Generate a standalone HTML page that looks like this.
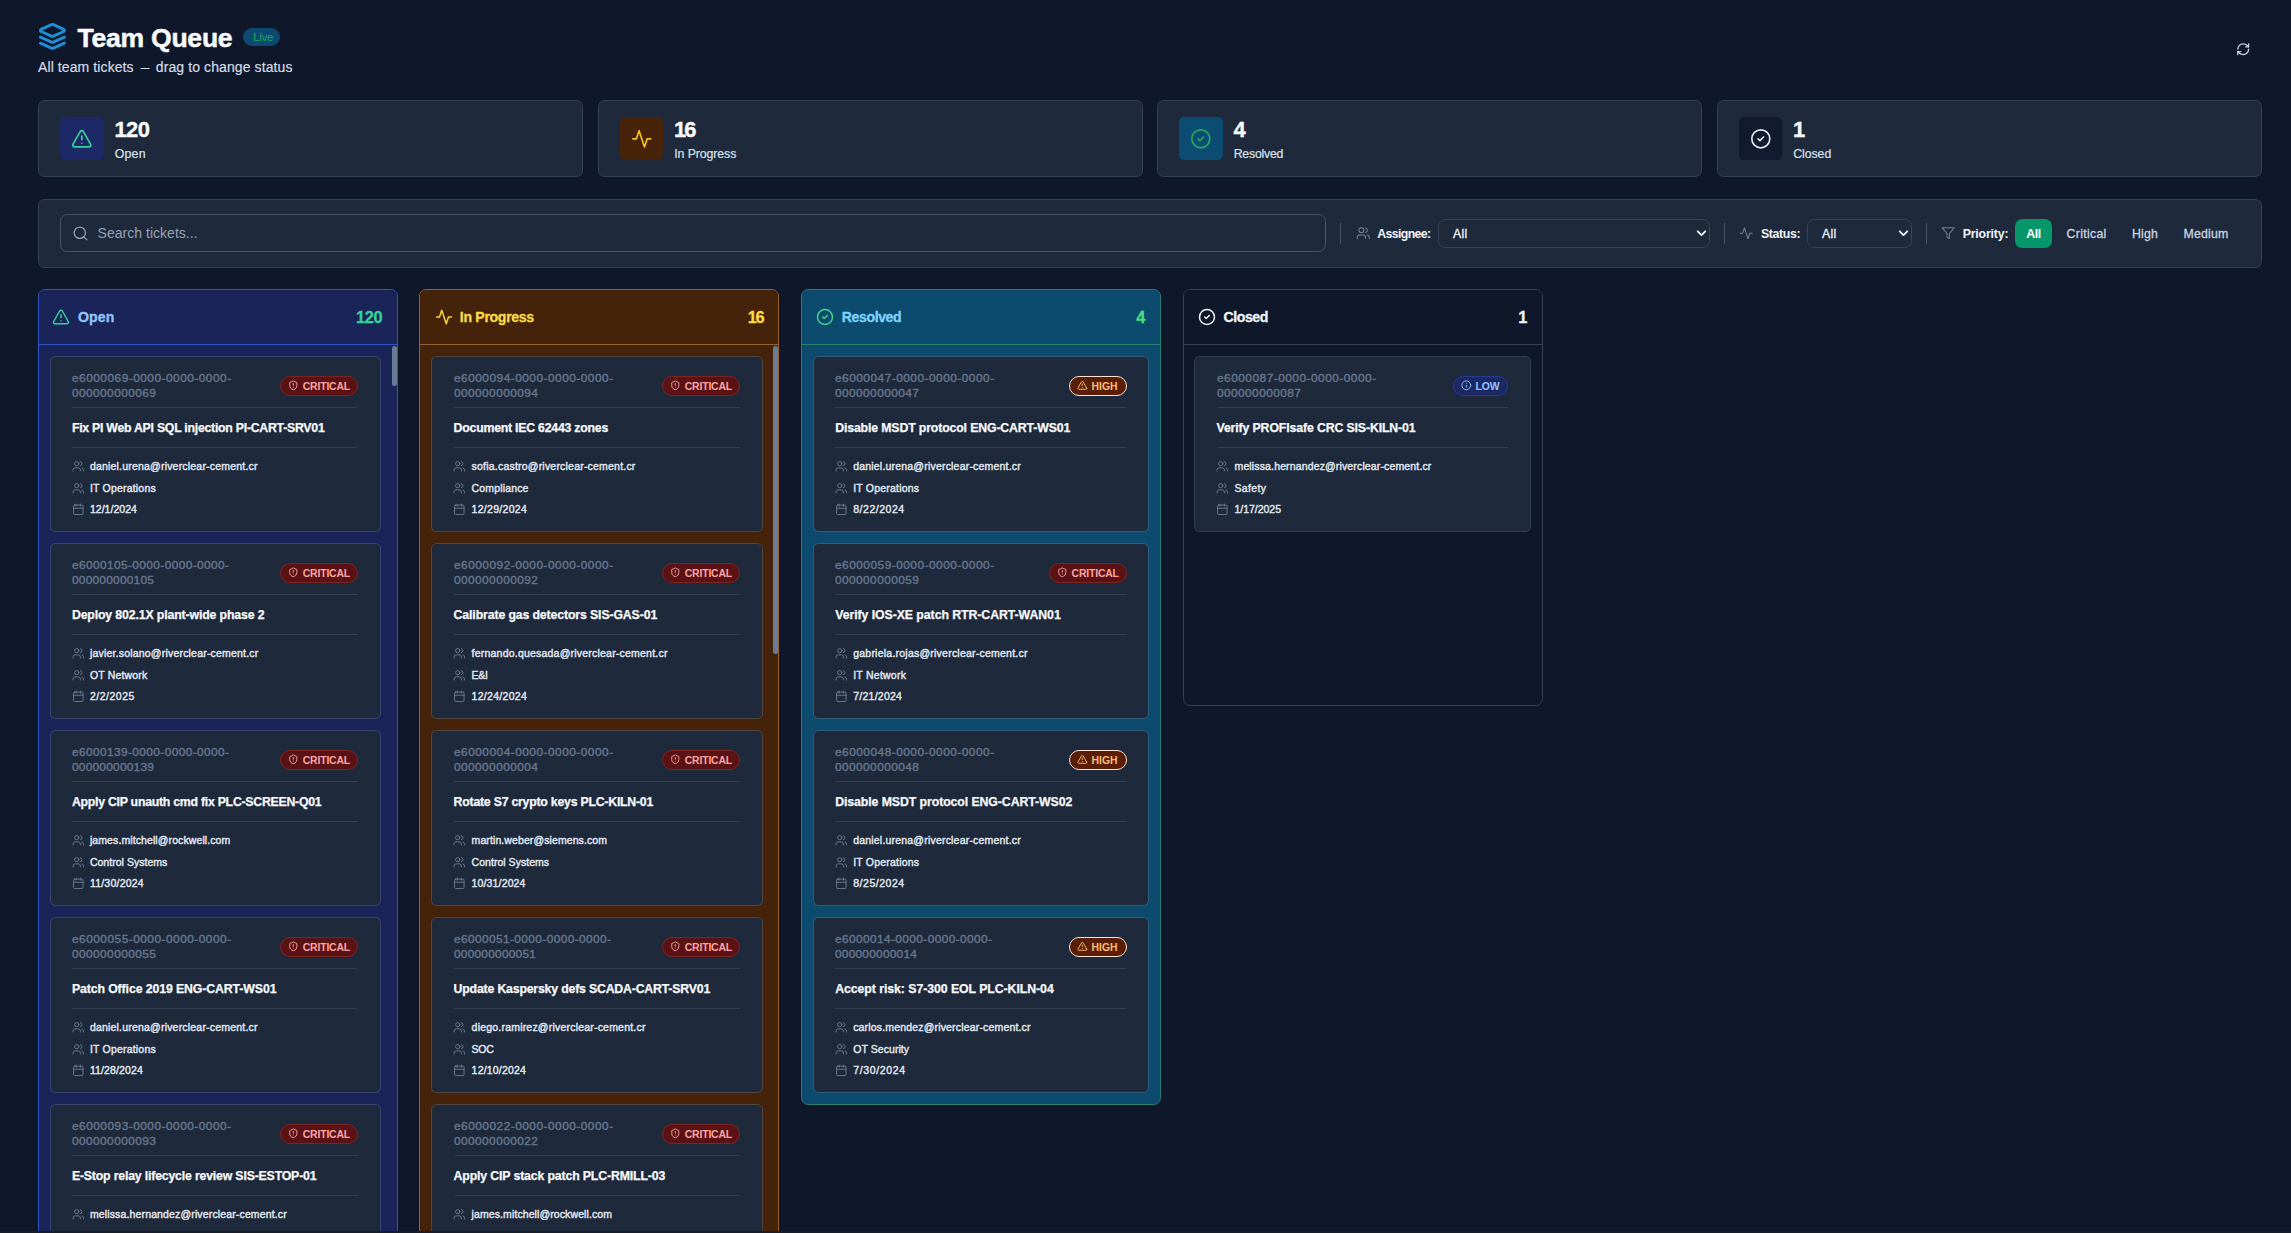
<!DOCTYPE html><html><head><meta charset="utf-8"><title>Team Queue</title><style>html,body{margin:0;padding:0;background:#0f172a;}body{width:2291px;height:1233px;overflow:hidden;position:relative;font-family:"Liberation Sans", sans-serif;}svg{display:block;overflow:visible}span{display:block}</style></head><body><svg style="position:absolute;left:38.30px;top:22.40px;" width="28.8" height="28.8" viewBox="0 0 24 24" fill="none" stroke="#1f8ed6" stroke-width="2.45" stroke-linecap="round" stroke-linejoin="round"><path d="m12.83 2.18a2 2 0 0 0-1.66 0L2.6 6.08a1 1 0 0 0 0 1.83l8.58 3.91a2 2 0 0 0 1.66 0l8.58-3.9a1 1 0 0 0 0-1.83Z"/><path d="m22 17.65-9.17 4.16a2 2 0 0 1-1.66 0L2 17.65"/><path d="m22 12.65-9.17 4.16a2 2 0 0 1-1.66 0L2 12.65"/></svg>
<span style="position:absolute;top:24.58px;font-size:26.6px;line-height:1;color:#f8fafc;white-space:nowrap;left:77.40px;font-weight:700;-webkit-text-stroke:0.5px #f8fafc;letter-spacing:-0.264px;">Team Queue</span>
<div style="position:absolute;left:243.00px;top:27.80px;width:37.20px;height:18.40px;box-sizing:border-box;background:#0c4a72;border-radius:10px;"></div>
<span style="position:absolute;top:31.28px;font-size:11.6px;line-height:1;color:#20a659;white-space:nowrap;left:253.20px;letter-spacing:-0.320px;">Live</span>
<span style="position:absolute;top:59.75px;font-size:14.0px;line-height:1;color:#d3dbe6;white-space:nowrap;left:38.00px;-webkit-text-stroke:0.2px #d3dbe6;letter-spacing:0.098px;">All team tickets <span style="display:inline-block;transform:scaleX(.62)">—</span> drag to change status</span>
<svg style="position:absolute;left:2236.00px;top:41.60px;" width="14.4" height="14.4" viewBox="0 0 24 24" fill="none" stroke="#cbd5e1" stroke-width="2.2" stroke-linecap="round" stroke-linejoin="round"><path d="M3 12a9 9 0 0 1 9-9 9.75 9.75 0 0 1 6.74 2.74L21 8"/><path d="M21 3v5h-5"/><path d="M21 12a9 9 0 0 1-9 9 9.75 9.75 0 0 1-6.74-2.74L3 16"/><path d="M8 16H3v5"/></svg>
<div style="position:absolute;left:38.25px;top:100.00px;width:545.08px;height:77.00px;box-sizing:border-box;background:#1e293b;border:1px solid #334155;border-radius:6.5px;"></div>
<div style="position:absolute;left:60.25px;top:117.00px;width:43.40px;height:43.20px;box-sizing:border-box;background:#1d2866;border-radius:5.4px;"></div>
<svg style="position:absolute;left:71.15px;top:127.80px;" width="21.6" height="21.6" viewBox="0 0 24 24" fill="none" stroke="#34d399" stroke-width="1.85" stroke-linecap="round" stroke-linejoin="round"><path d="m21.73 18-8-14a2 2 0 0 0-3.48 0l-8 14A2 2 0 0 0 4 21h16a2 2 0 0 0 1.73-3Z"/><path d="M12 9v4"/><path d="M12 17h.01"/></svg>
<span style="position:absolute;top:118.56px;font-size:21.9px;line-height:1;color:#f8fafc;white-space:nowrap;left:114.45px;font-weight:700;-webkit-text-stroke:0.4px #f8fafc;letter-spacing:-0.510px;">120</span>
<span style="position:absolute;top:147.59px;font-size:12.3px;line-height:1;color:#d9e1ec;white-space:nowrap;left:114.75px;-webkit-text-stroke:0.2px #d9e1ec;letter-spacing:0.227px;">Open</span>
<div style="position:absolute;left:597.73px;top:100.00px;width:545.08px;height:77.00px;box-sizing:border-box;background:#1e293b;border:1px solid #334155;border-radius:6.5px;"></div>
<div style="position:absolute;left:619.73px;top:117.00px;width:43.40px;height:43.20px;box-sizing:border-box;background:#47230a;border-radius:5.4px;"></div>
<svg style="position:absolute;left:630.62px;top:127.80px;" width="21.6" height="21.6" viewBox="0 0 24 24" fill="none" stroke="#fbbf24" stroke-width="1.85" stroke-linecap="round" stroke-linejoin="round"><path d="M22 12h-4l-3 9L9 3l-3 9H2"/></svg>
<span style="position:absolute;top:118.56px;font-size:21.9px;line-height:1;color:#f8fafc;white-space:nowrap;left:673.93px;font-weight:700;-webkit-text-stroke:0.4px #f8fafc;letter-spacing:-1.930px;">16</span>
<span style="position:absolute;top:147.59px;font-size:12.3px;line-height:1;color:#d9e1ec;white-space:nowrap;left:674.23px;-webkit-text-stroke:0.2px #d9e1ec;letter-spacing:-0.081px;">In Progress</span>
<div style="position:absolute;left:1157.20px;top:100.00px;width:545.08px;height:77.00px;box-sizing:border-box;background:#1e293b;border:1px solid #334155;border-radius:6.5px;"></div>
<div style="position:absolute;left:1179.20px;top:117.00px;width:43.40px;height:43.20px;box-sizing:border-box;background:#0d4c72;border-radius:5.4px;"></div>
<svg style="position:absolute;left:1190.10px;top:127.80px;" width="21.6" height="21.6" viewBox="0 0 24 24" fill="none" stroke="#21ab5c" stroke-width="1.85" stroke-linecap="round" stroke-linejoin="round"><circle cx="12" cy="12" r="10"/><path d="m9 12 2 2 4-4"/></svg>
<span style="position:absolute;top:118.56px;font-size:21.9px;line-height:1;color:#f8fafc;white-space:nowrap;left:1233.40px;font-weight:700;-webkit-text-stroke:0.4px #f8fafc;letter-spacing:1.312px;">4</span>
<span style="position:absolute;top:147.59px;font-size:12.3px;line-height:1;color:#d9e1ec;white-space:nowrap;left:1233.70px;-webkit-text-stroke:0.2px #d9e1ec;letter-spacing:-0.221px;">Resolved</span>
<div style="position:absolute;left:1716.68px;top:100.00px;width:545.08px;height:77.00px;box-sizing:border-box;background:#1e293b;border:1px solid #334155;border-radius:6.5px;"></div>
<div style="position:absolute;left:1738.68px;top:117.00px;width:43.40px;height:43.20px;box-sizing:border-box;background:#111a2e;border-radius:5.4px;"></div>
<svg style="position:absolute;left:1749.58px;top:127.80px;" width="21.6" height="21.6" viewBox="0 0 24 24" fill="none" stroke="#e2e8f0" stroke-width="1.85" stroke-linecap="round" stroke-linejoin="round"><circle cx="12" cy="12" r="10"/><path d="m9 12 2 2 4-4"/></svg>
<span style="position:absolute;top:118.56px;font-size:21.9px;line-height:1;color:#f8fafc;white-space:nowrap;left:1792.88px;font-weight:700;-webkit-text-stroke:0.4px #f8fafc;letter-spacing:-4.188px;">1</span>
<span style="position:absolute;top:147.59px;font-size:12.3px;line-height:1;color:#d9e1ec;white-space:nowrap;left:1793.18px;-webkit-text-stroke:0.2px #d9e1ec;letter-spacing:-0.047px;">Closed</span>
<div style="position:absolute;left:38.25px;top:199.00px;width:2223.50px;height:69.00px;box-sizing:border-box;background:#1e293b;border:1px solid #334155;border-radius:6.5px;"></div>
<div style="position:absolute;left:60.00px;top:214.00px;width:1266.00px;height:38.00px;box-sizing:border-box;background:#1e293b;border:1px solid #475569;border-radius:7.2px;"></div>
<svg style="position:absolute;left:71.50px;top:224.70px;" width="17" height="17" viewBox="0 0 24 24" fill="none" stroke="#94a3b8" stroke-width="1.8" stroke-linecap="round" stroke-linejoin="round"><circle cx="11" cy="11" r="8"/><path d="m21 21-4.3-4.3"/></svg>
<span style="position:absolute;top:226.15px;font-size:14.0px;line-height:1;color:#94a3b8;white-space:nowrap;left:97.60px;letter-spacing:0.024px;">Search tickets...</span>
<div style="position:absolute;left:1340.00px;top:223.00px;width:1.00px;height:21.00px;box-sizing:border-box;background:#475569;"></div>
<svg style="position:absolute;left:1356.00px;top:226.20px;" width="14.4" height="14.4" viewBox="0 0 24 24" fill="none" stroke="#75849b" stroke-width="1.7" stroke-linecap="round" stroke-linejoin="round"><path d="M16 21v-2a4 4 0 0 0-4-4H6a4 4 0 0 0-4 4v2"/><circle cx="9" cy="7" r="4"/><path d="M22 21v-2a4 4 0 0 0-3-3.87"/><path d="M16 3.13a4 4 0 0 1 0 7.75"/></svg>
<span style="position:absolute;top:227.59px;font-size:12.3px;line-height:1;color:#f1f5f9;white-space:nowrap;left:1377.20px;font-weight:700;letter-spacing:-0.598px;">Assignee:</span>
<div style="position:absolute;left:1438.00px;top:219.00px;width:272.00px;height:29.00px;box-sizing:border-box;background:#1e293b;border:1px solid #374559;border-radius:7.2px;"></div>
<span style="position:absolute;top:227.59px;font-size:12.3px;line-height:1;color:#f1f5f9;white-space:nowrap;left:1453.00px;-webkit-text-stroke:0.3px #f1f5f9;letter-spacing:0.276px;">All</span>
<svg style="position:absolute;left:1694.50px;top:226.50px;" width="13" height="13" viewBox="0 0 24 24" fill="none" stroke="#f1f5f9" stroke-width="3.4" stroke-linecap="round" stroke-linejoin="round"><path d="m5 8 7 7 7-7"/></svg>
<div style="position:absolute;left:1724.00px;top:223.00px;width:1.00px;height:21.00px;box-sizing:border-box;background:#475569;"></div>
<svg style="position:absolute;left:1739.00px;top:225.60px;" width="14.4" height="14.4" viewBox="0 0 24 24" fill="none" stroke="#75849b" stroke-width="1.7" stroke-linecap="round" stroke-linejoin="round"><path d="M22 12h-4l-3 9L9 3l-3 9H2"/></svg>
<span style="position:absolute;top:227.59px;font-size:12.3px;line-height:1;color:#f1f5f9;white-space:nowrap;left:1761.00px;font-weight:700;letter-spacing:-0.355px;">Status:</span>
<div style="position:absolute;left:1807.00px;top:219.00px;width:105.00px;height:29.00px;box-sizing:border-box;background:#1e293b;border:1px solid #374559;border-radius:7.2px;"></div>
<span style="position:absolute;top:227.59px;font-size:12.3px;line-height:1;color:#f1f5f9;white-space:nowrap;left:1822.00px;-webkit-text-stroke:0.3px #f1f5f9;letter-spacing:0.276px;">All</span>
<svg style="position:absolute;left:1896.50px;top:226.50px;" width="13" height="13" viewBox="0 0 24 24" fill="none" stroke="#f1f5f9" stroke-width="3.4" stroke-linecap="round" stroke-linejoin="round"><path d="m5 8 7 7 7-7"/></svg>
<div style="position:absolute;left:1926.00px;top:223.00px;width:1.00px;height:21.00px;box-sizing:border-box;background:#475569;"></div>
<svg style="position:absolute;left:1941.00px;top:226.00px;" width="14.4" height="14.4" viewBox="0 0 24 24" fill="none" stroke="#75849b" stroke-width="1.7" stroke-linecap="round" stroke-linejoin="round"><polygon points="22 3 2 3 10 12.46 10 19 14 21 14 12.46 22 3"/></svg>
<span style="position:absolute;top:227.59px;font-size:12.3px;line-height:1;color:#f1f5f9;white-space:nowrap;left:1962.70px;font-weight:700;letter-spacing:-0.162px;">Priority:</span>
<div style="position:absolute;left:2015.00px;top:219.00px;width:37.00px;height:29.00px;box-sizing:border-box;background:#059669;border-radius:7.2px;"></div>
<span style="position:absolute;top:227.59px;font-size:12.3px;line-height:1;color:#ffffff;white-space:nowrap;left:2026.30px;font-weight:700;letter-spacing:-0.406px;">All</span>
<span style="position:absolute;top:227.59px;font-size:12.3px;line-height:1;color:#cbd5e1;white-space:nowrap;left:2066.60px;-webkit-text-stroke:0.3px #cbd5e1;letter-spacing:0.303px;">Critical</span>
<span style="position:absolute;top:227.59px;font-size:12.3px;line-height:1;color:#cbd5e1;white-space:nowrap;left:2132.00px;-webkit-text-stroke:0.3px #cbd5e1;letter-spacing:0.176px;">High</span>
<span style="position:absolute;top:227.59px;font-size:12.3px;line-height:1;color:#cbd5e1;white-space:nowrap;left:2183.50px;-webkit-text-stroke:0.3px #cbd5e1;letter-spacing:0.208px;">Medium</span>
<div style="position:absolute;left:38.00px;top:289.00px;width:360.00px;height:1011.00px;box-sizing:border-box;background:#1b2459;border:1px solid #3354bd;border-radius:7.2px;overflow:hidden;"><div style="position:absolute;left:0.00px;top:0.00px;width:358.00px;height:55.00px;box-sizing:border-box;background:#1b2459;border-bottom:1px solid #3354bd;"></div><svg style="position:absolute;left:13.35px;top:18.40px;" width="18" height="18" viewBox="0 0 24 24" fill="none" stroke="#34d399" stroke-width="2" stroke-linecap="round" stroke-linejoin="round"><path d="m21.73 18-8-14a2 2 0 0 0-3.48 0l-8 14A2 2 0 0 0 4 21h16a2 2 0 0 0 1.73-3Z"/><path d="M12 9v4"/><path d="M12 17h.01"/></svg><span style="position:absolute;top:20.26px;font-size:14.1px;line-height:1;color:#93c5fd;white-space:nowrap;left:38.95px;font-weight:700;-webkit-text-stroke:0.3px #93c5fd;letter-spacing:0.117px;">Open</span><span style="position:absolute;top:18.92px;font-size:16.4px;line-height:1;color:#34d399;white-space:nowrap;right:14.85px;font-weight:700;-webkit-text-stroke:0.3px #34d399;letter-spacing:-0.386px;">120</span><div style="position:absolute;left:11.00px;top:66.00px;width:331.00px;height:176.00px;box-sizing:border-box;background:#1e293b;background-clip:padding-box;border:1px solid rgba(100,116,139,0.42);border-radius:5.6px;overflow:hidden;"><span style="position:absolute;top:16.03px;font-size:10.6px;line-height:1;color:#66768e;white-space:nowrap;left:20.90px;-webkit-text-stroke:0.38px #66768e;transform:scaleX(1.12);transform-origin:0 0;letter-spacing:0.439px;">e6000069-0000-0000-0000-</span><span style="position:absolute;top:30.93px;font-size:10.6px;line-height:1;color:#66768e;white-space:nowrap;left:20.90px;-webkit-text-stroke:0.38px #66768e;transform:scaleX(1.12);transform-origin:0 0;letter-spacing:0.380px;">000000000069</span><div style="position:absolute;left:229.40px;top:18.70px;width:78.00px;height:20.50px;box-sizing:border-box;background:#5b1214;border:1px solid #7c2623;border-radius:11px;"><svg style="position:absolute;left:6.80px;top:3.50px;" width="10.6" height="10.6" viewBox="0 0 24 24" fill="none" stroke="#fca5a5" stroke-width="2.1" stroke-linecap="round" stroke-linejoin="round"><path d="M20 13c0 5-3.5 7.5-7.66 8.95a1 1 0 0 1-.67-.01C7.5 20.5 4 18 4 13V6a1 1 0 0 1 1-1c2 0 4.5-1.2 6.24-2.72a1.17 1.17 0 0 1 1.52 0C14.51 3.81 17 5 19 5a1 1 0 0 1 1 1z"/><path d="M12 8v4"/><path d="M12 16h.01"/></svg><span style="position:absolute;top:5.30px;font-size:10.4px;line-height:1;color:#fca5a5;white-space:nowrap;left:21.40px;font-weight:700;letter-spacing:-0.161px;">CRITICAL</span></div><div style="position:absolute;left:21.10px;top:50.00px;width:286.30px;height:1.00px;box-sizing:border-box;background:#323e53;"></div><span style="position:absolute;top:65.29px;font-size:12.3px;line-height:1;color:#f8fafc;white-space:nowrap;left:20.90px;font-weight:700;-webkit-text-stroke:0.25px #f8fafc;letter-spacing:-0.255px;">Fix PI Web API SQL injection PI-CART-SRV01</span><div style="position:absolute;left:21.10px;top:90.00px;width:286.30px;height:1.00px;box-sizing:border-box;background:#323e53;"></div><svg style="position:absolute;left:20.50px;top:103.00px;" width="12.6" height="12.6" viewBox="0 0 24 24" fill="none" stroke="#718096" stroke-width="1.7" stroke-linecap="round" stroke-linejoin="round"><path d="M16 21v-2a4 4 0 0 0-4-4H6a4 4 0 0 0-4 4v2"/><circle cx="9" cy="7" r="4"/><path d="M22 21v-2a4 4 0 0 0-3-3.87"/><path d="M16 3.13a4 4 0 0 1 0 7.75"/></svg><span style="position:absolute;top:104.31px;font-size:10.5px;line-height:1;color:#e2e8f0;white-space:nowrap;left:38.90px;-webkit-text-stroke:0.4px #e2e8f0;letter-spacing:0.199px;">daniel.urena@riverclear-cement.cr</span><svg style="position:absolute;left:20.50px;top:124.50px;" width="12.6" height="12.6" viewBox="0 0 24 24" fill="none" stroke="#718096" stroke-width="1.7" stroke-linecap="round" stroke-linejoin="round"><path d="M16 21v-2a4 4 0 0 0-4-4H6a4 4 0 0 0-4 4v2"/><circle cx="9" cy="7" r="4"/><path d="M22 21v-2a4 4 0 0 0-3-3.87"/><path d="M16 3.13a4 4 0 0 1 0 7.75"/></svg><span style="position:absolute;top:125.81px;font-size:10.5px;line-height:1;color:#e2e8f0;white-space:nowrap;left:38.90px;-webkit-text-stroke:0.4px #e2e8f0;letter-spacing:0.198px;">IT Operations</span><svg style="position:absolute;left:20.50px;top:146.00px;" width="12.6" height="12.6" viewBox="0 0 24 24" fill="none" stroke="#718096" stroke-width="1.7" stroke-linecap="round" stroke-linejoin="round"><path d="M8 2v4"/><path d="M16 2v4"/><rect width="18" height="18" x="3" y="4" rx="2"/><path d="M3 10h18"/></svg><span style="position:absolute;top:147.31px;font-size:10.5px;line-height:1;color:#e2e8f0;white-space:nowrap;left:38.90px;-webkit-text-stroke:0.4px #e2e8f0;letter-spacing:0.031px;">12/1/2024</span></div><div style="position:absolute;left:11.00px;top:253.00px;width:331.00px;height:176.00px;box-sizing:border-box;background:#1e293b;background-clip:padding-box;border:1px solid rgba(100,116,139,0.42);border-radius:5.6px;overflow:hidden;"><span style="position:absolute;top:16.03px;font-size:10.6px;line-height:1;color:#66768e;white-space:nowrap;left:20.90px;-webkit-text-stroke:0.38px #66768e;transform:scaleX(1.12);transform-origin:0 0;letter-spacing:0.358px;">e6000105-0000-0000-0000-</span><span style="position:absolute;top:30.93px;font-size:10.6px;line-height:1;color:#66768e;white-space:nowrap;left:20.90px;-webkit-text-stroke:0.38px #66768e;transform:scaleX(1.12);transform-origin:0 0;letter-spacing:0.217px;">000000000105</span><div style="position:absolute;left:229.40px;top:18.70px;width:78.00px;height:20.50px;box-sizing:border-box;background:#5b1214;border:1px solid #7c2623;border-radius:11px;"><svg style="position:absolute;left:6.80px;top:3.50px;" width="10.6" height="10.6" viewBox="0 0 24 24" fill="none" stroke="#fca5a5" stroke-width="2.1" stroke-linecap="round" stroke-linejoin="round"><path d="M20 13c0 5-3.5 7.5-7.66 8.95a1 1 0 0 1-.67-.01C7.5 20.5 4 18 4 13V6a1 1 0 0 1 1-1c2 0 4.5-1.2 6.24-2.72a1.17 1.17 0 0 1 1.52 0C14.51 3.81 17 5 19 5a1 1 0 0 1 1 1z"/><path d="M12 8v4"/><path d="M12 16h.01"/></svg><span style="position:absolute;top:5.30px;font-size:10.4px;line-height:1;color:#fca5a5;white-space:nowrap;left:21.40px;font-weight:700;letter-spacing:-0.161px;">CRITICAL</span></div><div style="position:absolute;left:21.10px;top:50.00px;width:286.30px;height:1.00px;box-sizing:border-box;background:#323e53;"></div><span style="position:absolute;top:65.29px;font-size:12.3px;line-height:1;color:#f8fafc;white-space:nowrap;left:20.90px;font-weight:700;-webkit-text-stroke:0.25px #f8fafc;letter-spacing:-0.135px;">Deploy 802.1X plant-wide phase 2</span><div style="position:absolute;left:21.10px;top:90.00px;width:286.30px;height:1.00px;box-sizing:border-box;background:#323e53;"></div><svg style="position:absolute;left:20.50px;top:103.00px;" width="12.6" height="12.6" viewBox="0 0 24 24" fill="none" stroke="#718096" stroke-width="1.7" stroke-linecap="round" stroke-linejoin="round"><path d="M16 21v-2a4 4 0 0 0-4-4H6a4 4 0 0 0-4 4v2"/><circle cx="9" cy="7" r="4"/><path d="M22 21v-2a4 4 0 0 0-3-3.87"/><path d="M16 3.13a4 4 0 0 1 0 7.75"/></svg><span style="position:absolute;top:104.31px;font-size:10.5px;line-height:1;color:#e2e8f0;white-space:nowrap;left:38.90px;-webkit-text-stroke:0.4px #e2e8f0;letter-spacing:0.200px;">javier.solano@riverclear-cement.cr</span><svg style="position:absolute;left:20.50px;top:124.50px;" width="12.6" height="12.6" viewBox="0 0 24 24" fill="none" stroke="#718096" stroke-width="1.7" stroke-linecap="round" stroke-linejoin="round"><path d="M16 21v-2a4 4 0 0 0-4-4H6a4 4 0 0 0-4 4v2"/><circle cx="9" cy="7" r="4"/><path d="M22 21v-2a4 4 0 0 0-3-3.87"/><path d="M16 3.13a4 4 0 0 1 0 7.75"/></svg><span style="position:absolute;top:125.81px;font-size:10.5px;line-height:1;color:#e2e8f0;white-space:nowrap;left:38.90px;-webkit-text-stroke:0.4px #e2e8f0;letter-spacing:0.167px;">OT Network</span><svg style="position:absolute;left:20.50px;top:146.00px;" width="12.6" height="12.6" viewBox="0 0 24 24" fill="none" stroke="#718096" stroke-width="1.7" stroke-linecap="round" stroke-linejoin="round"><path d="M8 2v4"/><path d="M16 2v4"/><rect width="18" height="18" x="3" y="4" rx="2"/><path d="M3 10h18"/></svg><span style="position:absolute;top:147.31px;font-size:10.5px;line-height:1;color:#e2e8f0;white-space:nowrap;left:38.90px;-webkit-text-stroke:0.4px #e2e8f0;letter-spacing:0.516px;">2/2/2025</span></div><div style="position:absolute;left:11.00px;top:440.00px;width:331.00px;height:176.00px;box-sizing:border-box;background:#1e293b;background-clip:padding-box;border:1px solid rgba(100,116,139,0.42);border-radius:5.6px;overflow:hidden;"><span style="position:absolute;top:16.03px;font-size:10.6px;line-height:1;color:#66768e;white-space:nowrap;left:20.90px;-webkit-text-stroke:0.38px #66768e;transform:scaleX(1.12);transform-origin:0 0;letter-spacing:0.358px;">e6000139-0000-0000-0000-</span><span style="position:absolute;top:30.93px;font-size:10.6px;line-height:1;color:#66768e;white-space:nowrap;left:20.90px;-webkit-text-stroke:0.38px #66768e;transform:scaleX(1.12);transform-origin:0 0;letter-spacing:0.217px;">000000000139</span><div style="position:absolute;left:229.40px;top:18.70px;width:78.00px;height:20.50px;box-sizing:border-box;background:#5b1214;border:1px solid #7c2623;border-radius:11px;"><svg style="position:absolute;left:6.80px;top:3.50px;" width="10.6" height="10.6" viewBox="0 0 24 24" fill="none" stroke="#fca5a5" stroke-width="2.1" stroke-linecap="round" stroke-linejoin="round"><path d="M20 13c0 5-3.5 7.5-7.66 8.95a1 1 0 0 1-.67-.01C7.5 20.5 4 18 4 13V6a1 1 0 0 1 1-1c2 0 4.5-1.2 6.24-2.72a1.17 1.17 0 0 1 1.52 0C14.51 3.81 17 5 19 5a1 1 0 0 1 1 1z"/><path d="M12 8v4"/><path d="M12 16h.01"/></svg><span style="position:absolute;top:5.30px;font-size:10.4px;line-height:1;color:#fca5a5;white-space:nowrap;left:21.40px;font-weight:700;letter-spacing:-0.161px;">CRITICAL</span></div><div style="position:absolute;left:21.10px;top:50.00px;width:286.30px;height:1.00px;box-sizing:border-box;background:#323e53;"></div><span style="position:absolute;top:65.29px;font-size:12.3px;line-height:1;color:#f8fafc;white-space:nowrap;left:20.90px;font-weight:700;-webkit-text-stroke:0.25px #f8fafc;letter-spacing:-0.254px;">Apply CIP unauth cmd fix PLC-SCREEN-Q01</span><div style="position:absolute;left:21.10px;top:90.00px;width:286.30px;height:1.00px;box-sizing:border-box;background:#323e53;"></div><svg style="position:absolute;left:20.50px;top:103.00px;" width="12.6" height="12.6" viewBox="0 0 24 24" fill="none" stroke="#718096" stroke-width="1.7" stroke-linecap="round" stroke-linejoin="round"><path d="M16 21v-2a4 4 0 0 0-4-4H6a4 4 0 0 0-4 4v2"/><circle cx="9" cy="7" r="4"/><path d="M22 21v-2a4 4 0 0 0-3-3.87"/><path d="M16 3.13a4 4 0 0 1 0 7.75"/></svg><span style="position:absolute;top:104.31px;font-size:10.5px;line-height:1;color:#e2e8f0;white-space:nowrap;left:38.90px;-webkit-text-stroke:0.4px #e2e8f0;letter-spacing:0.098px;">james.mitchell@rockwell.com</span><svg style="position:absolute;left:20.50px;top:124.50px;" width="12.6" height="12.6" viewBox="0 0 24 24" fill="none" stroke="#718096" stroke-width="1.7" stroke-linecap="round" stroke-linejoin="round"><path d="M16 21v-2a4 4 0 0 0-4-4H6a4 4 0 0 0-4 4v2"/><circle cx="9" cy="7" r="4"/><path d="M22 21v-2a4 4 0 0 0-3-3.87"/><path d="M16 3.13a4 4 0 0 1 0 7.75"/></svg><span style="position:absolute;top:125.81px;font-size:10.5px;line-height:1;color:#e2e8f0;white-space:nowrap;left:38.90px;-webkit-text-stroke:0.4px #e2e8f0;letter-spacing:0.031px;">Control Systems</span><svg style="position:absolute;left:20.50px;top:146.00px;" width="12.6" height="12.6" viewBox="0 0 24 24" fill="none" stroke="#718096" stroke-width="1.7" stroke-linecap="round" stroke-linejoin="round"><path d="M8 2v4"/><path d="M16 2v4"/><rect width="18" height="18" x="3" y="4" rx="2"/><path d="M3 10h18"/></svg><span style="position:absolute;top:147.31px;font-size:10.5px;line-height:1;color:#e2e8f0;white-space:nowrap;left:38.90px;-webkit-text-stroke:0.4px #e2e8f0;letter-spacing:0.222px;">11/30/2024</span></div><div style="position:absolute;left:11.00px;top:627.00px;width:331.00px;height:176.00px;box-sizing:border-box;background:#1e293b;background-clip:padding-box;border:1px solid rgba(100,116,139,0.42);border-radius:5.6px;overflow:hidden;"><span style="position:absolute;top:16.03px;font-size:10.6px;line-height:1;color:#66768e;white-space:nowrap;left:20.90px;-webkit-text-stroke:0.38px #66768e;transform:scaleX(1.12);transform-origin:0 0;letter-spacing:0.439px;">e6000055-0000-0000-0000-</span><span style="position:absolute;top:30.93px;font-size:10.6px;line-height:1;color:#66768e;white-space:nowrap;left:20.90px;-webkit-text-stroke:0.38px #66768e;transform:scaleX(1.12);transform-origin:0 0;letter-spacing:0.380px;">000000000055</span><div style="position:absolute;left:229.40px;top:18.70px;width:78.00px;height:20.50px;box-sizing:border-box;background:#5b1214;border:1px solid #7c2623;border-radius:11px;"><svg style="position:absolute;left:6.80px;top:3.50px;" width="10.6" height="10.6" viewBox="0 0 24 24" fill="none" stroke="#fca5a5" stroke-width="2.1" stroke-linecap="round" stroke-linejoin="round"><path d="M20 13c0 5-3.5 7.5-7.66 8.95a1 1 0 0 1-.67-.01C7.5 20.5 4 18 4 13V6a1 1 0 0 1 1-1c2 0 4.5-1.2 6.24-2.72a1.17 1.17 0 0 1 1.52 0C14.51 3.81 17 5 19 5a1 1 0 0 1 1 1z"/><path d="M12 8v4"/><path d="M12 16h.01"/></svg><span style="position:absolute;top:5.30px;font-size:10.4px;line-height:1;color:#fca5a5;white-space:nowrap;left:21.40px;font-weight:700;letter-spacing:-0.161px;">CRITICAL</span></div><div style="position:absolute;left:21.10px;top:50.00px;width:286.30px;height:1.00px;box-sizing:border-box;background:#323e53;"></div><span style="position:absolute;top:65.29px;font-size:12.3px;line-height:1;color:#f8fafc;white-space:nowrap;left:20.90px;font-weight:700;-webkit-text-stroke:0.25px #f8fafc;letter-spacing:-0.105px;">Patch Office 2019 ENG-CART-WS01</span><div style="position:absolute;left:21.10px;top:90.00px;width:286.30px;height:1.00px;box-sizing:border-box;background:#323e53;"></div><svg style="position:absolute;left:20.50px;top:103.00px;" width="12.6" height="12.6" viewBox="0 0 24 24" fill="none" stroke="#718096" stroke-width="1.7" stroke-linecap="round" stroke-linejoin="round"><path d="M16 21v-2a4 4 0 0 0-4-4H6a4 4 0 0 0-4 4v2"/><circle cx="9" cy="7" r="4"/><path d="M22 21v-2a4 4 0 0 0-3-3.87"/><path d="M16 3.13a4 4 0 0 1 0 7.75"/></svg><span style="position:absolute;top:104.31px;font-size:10.5px;line-height:1;color:#e2e8f0;white-space:nowrap;left:38.90px;-webkit-text-stroke:0.4px #e2e8f0;letter-spacing:0.199px;">daniel.urena@riverclear-cement.cr</span><svg style="position:absolute;left:20.50px;top:124.50px;" width="12.6" height="12.6" viewBox="0 0 24 24" fill="none" stroke="#718096" stroke-width="1.7" stroke-linecap="round" stroke-linejoin="round"><path d="M16 21v-2a4 4 0 0 0-4-4H6a4 4 0 0 0-4 4v2"/><circle cx="9" cy="7" r="4"/><path d="M22 21v-2a4 4 0 0 0-3-3.87"/><path d="M16 3.13a4 4 0 0 1 0 7.75"/></svg><span style="position:absolute;top:125.81px;font-size:10.5px;line-height:1;color:#e2e8f0;white-space:nowrap;left:38.90px;-webkit-text-stroke:0.4px #e2e8f0;letter-spacing:0.198px;">IT Operations</span><svg style="position:absolute;left:20.50px;top:146.00px;" width="12.6" height="12.6" viewBox="0 0 24 24" fill="none" stroke="#718096" stroke-width="1.7" stroke-linecap="round" stroke-linejoin="round"><path d="M8 2v4"/><path d="M16 2v4"/><rect width="18" height="18" x="3" y="4" rx="2"/><path d="M3 10h18"/></svg><span style="position:absolute;top:147.31px;font-size:10.5px;line-height:1;color:#e2e8f0;white-space:nowrap;left:38.90px;-webkit-text-stroke:0.4px #e2e8f0;letter-spacing:0.122px;">11/28/2024</span></div><div style="position:absolute;left:11.00px;top:814.00px;width:331.00px;height:176.00px;box-sizing:border-box;background:#1e293b;background-clip:padding-box;border:1px solid rgba(100,116,139,0.42);border-radius:5.6px;overflow:hidden;"><span style="position:absolute;top:16.03px;font-size:10.6px;line-height:1;color:#66768e;white-space:nowrap;left:20.90px;-webkit-text-stroke:0.38px #66768e;transform:scaleX(1.12);transform-origin:0 0;letter-spacing:0.439px;">e6000093-0000-0000-0000-</span><span style="position:absolute;top:30.93px;font-size:10.6px;line-height:1;color:#66768e;white-space:nowrap;left:20.90px;-webkit-text-stroke:0.38px #66768e;transform:scaleX(1.12);transform-origin:0 0;letter-spacing:0.380px;">000000000093</span><div style="position:absolute;left:229.40px;top:18.70px;width:78.00px;height:20.50px;box-sizing:border-box;background:#5b1214;border:1px solid #7c2623;border-radius:11px;"><svg style="position:absolute;left:6.80px;top:3.50px;" width="10.6" height="10.6" viewBox="0 0 24 24" fill="none" stroke="#fca5a5" stroke-width="2.1" stroke-linecap="round" stroke-linejoin="round"><path d="M20 13c0 5-3.5 7.5-7.66 8.95a1 1 0 0 1-.67-.01C7.5 20.5 4 18 4 13V6a1 1 0 0 1 1-1c2 0 4.5-1.2 6.24-2.72a1.17 1.17 0 0 1 1.52 0C14.51 3.81 17 5 19 5a1 1 0 0 1 1 1z"/><path d="M12 8v4"/><path d="M12 16h.01"/></svg><span style="position:absolute;top:5.30px;font-size:10.4px;line-height:1;color:#fca5a5;white-space:nowrap;left:21.40px;font-weight:700;letter-spacing:-0.161px;">CRITICAL</span></div><div style="position:absolute;left:21.10px;top:50.00px;width:286.30px;height:1.00px;box-sizing:border-box;background:#323e53;"></div><span style="position:absolute;top:65.29px;font-size:12.3px;line-height:1;color:#f8fafc;white-space:nowrap;left:20.90px;font-weight:700;-webkit-text-stroke:0.25px #f8fafc;letter-spacing:-0.178px;">E-Stop relay lifecycle review SIS-ESTOP-01</span><div style="position:absolute;left:21.10px;top:90.00px;width:286.30px;height:1.00px;box-sizing:border-box;background:#323e53;"></div><svg style="position:absolute;left:20.50px;top:103.00px;" width="12.6" height="12.6" viewBox="0 0 24 24" fill="none" stroke="#718096" stroke-width="1.7" stroke-linecap="round" stroke-linejoin="round"><path d="M16 21v-2a4 4 0 0 0-4-4H6a4 4 0 0 0-4 4v2"/><circle cx="9" cy="7" r="4"/><path d="M22 21v-2a4 4 0 0 0-3-3.87"/><path d="M16 3.13a4 4 0 0 1 0 7.75"/></svg><span style="position:absolute;top:104.31px;font-size:10.5px;line-height:1;color:#e2e8f0;white-space:nowrap;left:38.90px;-webkit-text-stroke:0.4px #e2e8f0;letter-spacing:0.143px;">melissa.hernandez@riverclear-cement.cr</span><svg style="position:absolute;left:20.50px;top:124.50px;" width="12.6" height="12.6" viewBox="0 0 24 24" fill="none" stroke="#718096" stroke-width="1.7" stroke-linecap="round" stroke-linejoin="round"><path d="M16 21v-2a4 4 0 0 0-4-4H6a4 4 0 0 0-4 4v2"/><circle cx="9" cy="7" r="4"/><path d="M22 21v-2a4 4 0 0 0-3-3.87"/><path d="M16 3.13a4 4 0 0 1 0 7.75"/></svg><span style="position:absolute;top:125.81px;font-size:10.5px;line-height:1;color:#e2e8f0;white-space:nowrap;left:38.90px;-webkit-text-stroke:0.4px #e2e8f0;letter-spacing:0.036px;">Safety</span><svg style="position:absolute;left:20.50px;top:146.00px;" width="12.6" height="12.6" viewBox="0 0 24 24" fill="none" stroke="#718096" stroke-width="1.7" stroke-linecap="round" stroke-linejoin="round"><path d="M8 2v4"/><path d="M16 2v4"/><rect width="18" height="18" x="3" y="4" rx="2"/><path d="M3 10h18"/></svg><span style="position:absolute;top:147.31px;font-size:10.5px;line-height:1;color:#e2e8f0;white-space:nowrap;left:38.90px;-webkit-text-stroke:0.4px #e2e8f0;letter-spacing:0.122px;">11/27/2024</span></div><div style="position:absolute;left:353.00px;top:56.00px;width:5.00px;height:40.00px;box-sizing:border-box;background:#6a7b96;border-radius:3px;"></div></div>
<div style="position:absolute;left:419.00px;top:289.00px;width:360.00px;height:1011.00px;box-sizing:border-box;background:#44230a;border:1px solid #94622f;border-radius:7.2px;overflow:hidden;"><div style="position:absolute;left:0.00px;top:0.00px;width:358.00px;height:55.00px;box-sizing:border-box;background:#44230a;border-bottom:1px solid #94622f;"></div><svg style="position:absolute;left:15.15px;top:18.40px;" width="18" height="18" viewBox="0 0 24 24" fill="none" stroke="#f7d43c" stroke-width="2" stroke-linecap="round" stroke-linejoin="round"><path d="M22 12h-4l-3 9L9 3l-3 9H2"/></svg><span style="position:absolute;top:20.26px;font-size:14.1px;line-height:1;color:#fbdc45;white-space:nowrap;left:39.85px;font-weight:700;-webkit-text-stroke:0.3px #fbdc45;letter-spacing:-0.322px;">In Progress</span><span style="position:absolute;top:18.92px;font-size:16.4px;line-height:1;color:#fbdc45;white-space:nowrap;right:14.85px;font-weight:700;-webkit-text-stroke:0.3px #fbdc45;letter-spacing:-1.467px;">16</span><div style="position:absolute;left:11.00px;top:66.00px;width:332.00px;height:176.00px;box-sizing:border-box;background:#1e293b;background-clip:padding-box;border:1px solid rgba(100,116,139,0.42);border-radius:5.6px;overflow:hidden;"><span style="position:absolute;top:16.03px;font-size:10.6px;line-height:1;color:#66768e;white-space:nowrap;left:21.60px;-webkit-text-stroke:0.38px #66768e;transform:scaleX(1.12);transform-origin:0 0;letter-spacing:0.439px;">e6000094-0000-0000-0000-</span><span style="position:absolute;top:30.93px;font-size:10.6px;line-height:1;color:#66768e;white-space:nowrap;left:21.60px;-webkit-text-stroke:0.38px #66768e;transform:scaleX(1.12);transform-origin:0 0;letter-spacing:0.380px;">000000000094</span><div style="position:absolute;left:230.40px;top:18.70px;width:78.00px;height:20.50px;box-sizing:border-box;background:#5b1214;border:1px solid #7c2623;border-radius:11px;"><svg style="position:absolute;left:6.80px;top:3.50px;" width="10.6" height="10.6" viewBox="0 0 24 24" fill="none" stroke="#fca5a5" stroke-width="2.1" stroke-linecap="round" stroke-linejoin="round"><path d="M20 13c0 5-3.5 7.5-7.66 8.95a1 1 0 0 1-.67-.01C7.5 20.5 4 18 4 13V6a1 1 0 0 1 1-1c2 0 4.5-1.2 6.24-2.72a1.17 1.17 0 0 1 1.52 0C14.51 3.81 17 5 19 5a1 1 0 0 1 1 1z"/><path d="M12 8v4"/><path d="M12 16h.01"/></svg><span style="position:absolute;top:5.30px;font-size:10.4px;line-height:1;color:#fca5a5;white-space:nowrap;left:21.40px;font-weight:700;letter-spacing:-0.161px;">CRITICAL</span></div><div style="position:absolute;left:21.80px;top:50.00px;width:286.60px;height:1.00px;box-sizing:border-box;background:#323e53;"></div><span style="position:absolute;top:65.29px;font-size:12.3px;line-height:1;color:#f8fafc;white-space:nowrap;left:21.60px;font-weight:700;-webkit-text-stroke:0.25px #f8fafc;letter-spacing:-0.226px;">Document IEC 62443 zones</span><div style="position:absolute;left:21.80px;top:90.00px;width:286.60px;height:1.00px;box-sizing:border-box;background:#323e53;"></div><svg style="position:absolute;left:21.20px;top:103.00px;" width="12.6" height="12.6" viewBox="0 0 24 24" fill="none" stroke="#718096" stroke-width="1.7" stroke-linecap="round" stroke-linejoin="round"><path d="M16 21v-2a4 4 0 0 0-4-4H6a4 4 0 0 0-4 4v2"/><circle cx="9" cy="7" r="4"/><path d="M22 21v-2a4 4 0 0 0-3-3.87"/><path d="M16 3.13a4 4 0 0 1 0 7.75"/></svg><span style="position:absolute;top:104.31px;font-size:10.5px;line-height:1;color:#e2e8f0;white-space:nowrap;left:39.60px;-webkit-text-stroke:0.4px #e2e8f0;letter-spacing:0.208px;">sofia.castro@riverclear-cement.cr</span><svg style="position:absolute;left:21.20px;top:124.50px;" width="12.6" height="12.6" viewBox="0 0 24 24" fill="none" stroke="#718096" stroke-width="1.7" stroke-linecap="round" stroke-linejoin="round"><path d="M16 21v-2a4 4 0 0 0-4-4H6a4 4 0 0 0-4 4v2"/><circle cx="9" cy="7" r="4"/><path d="M22 21v-2a4 4 0 0 0-3-3.87"/><path d="M16 3.13a4 4 0 0 1 0 7.75"/></svg><span style="position:absolute;top:125.81px;font-size:10.5px;line-height:1;color:#e2e8f0;white-space:nowrap;left:39.60px;-webkit-text-stroke:0.4px #e2e8f0;letter-spacing:0.155px;">Compliance</span><svg style="position:absolute;left:21.20px;top:146.00px;" width="12.6" height="12.6" viewBox="0 0 24 24" fill="none" stroke="#718096" stroke-width="1.7" stroke-linecap="round" stroke-linejoin="round"><path d="M8 2v4"/><path d="M16 2v4"/><rect width="18" height="18" x="3" y="4" rx="2"/><path d="M3 10h18"/></svg><span style="position:absolute;top:147.31px;font-size:10.5px;line-height:1;color:#e2e8f0;white-space:nowrap;left:39.60px;-webkit-text-stroke:0.4px #e2e8f0;letter-spacing:0.294px;">12/29/2024</span></div><div style="position:absolute;left:11.00px;top:253.00px;width:332.00px;height:176.00px;box-sizing:border-box;background:#1e293b;background-clip:padding-box;border:1px solid rgba(100,116,139,0.42);border-radius:5.6px;overflow:hidden;"><span style="position:absolute;top:16.03px;font-size:10.6px;line-height:1;color:#66768e;white-space:nowrap;left:21.60px;-webkit-text-stroke:0.38px #66768e;transform:scaleX(1.12);transform-origin:0 0;letter-spacing:0.439px;">e6000092-0000-0000-0000-</span><span style="position:absolute;top:30.93px;font-size:10.6px;line-height:1;color:#66768e;white-space:nowrap;left:21.60px;-webkit-text-stroke:0.38px #66768e;transform:scaleX(1.12);transform-origin:0 0;letter-spacing:0.380px;">000000000092</span><div style="position:absolute;left:230.40px;top:18.70px;width:78.00px;height:20.50px;box-sizing:border-box;background:#5b1214;border:1px solid #7c2623;border-radius:11px;"><svg style="position:absolute;left:6.80px;top:3.50px;" width="10.6" height="10.6" viewBox="0 0 24 24" fill="none" stroke="#fca5a5" stroke-width="2.1" stroke-linecap="round" stroke-linejoin="round"><path d="M20 13c0 5-3.5 7.5-7.66 8.95a1 1 0 0 1-.67-.01C7.5 20.5 4 18 4 13V6a1 1 0 0 1 1-1c2 0 4.5-1.2 6.24-2.72a1.17 1.17 0 0 1 1.52 0C14.51 3.81 17 5 19 5a1 1 0 0 1 1 1z"/><path d="M12 8v4"/><path d="M12 16h.01"/></svg><span style="position:absolute;top:5.30px;font-size:10.4px;line-height:1;color:#fca5a5;white-space:nowrap;left:21.40px;font-weight:700;letter-spacing:-0.161px;">CRITICAL</span></div><div style="position:absolute;left:21.80px;top:50.00px;width:286.60px;height:1.00px;box-sizing:border-box;background:#323e53;"></div><span style="position:absolute;top:65.29px;font-size:12.3px;line-height:1;color:#f8fafc;white-space:nowrap;left:21.60px;font-weight:700;-webkit-text-stroke:0.25px #f8fafc;letter-spacing:-0.125px;">Calibrate gas detectors SIS-GAS-01</span><div style="position:absolute;left:21.80px;top:90.00px;width:286.60px;height:1.00px;box-sizing:border-box;background:#323e53;"></div><svg style="position:absolute;left:21.20px;top:103.00px;" width="12.6" height="12.6" viewBox="0 0 24 24" fill="none" stroke="#718096" stroke-width="1.7" stroke-linecap="round" stroke-linejoin="round"><path d="M16 21v-2a4 4 0 0 0-4-4H6a4 4 0 0 0-4 4v2"/><circle cx="9" cy="7" r="4"/><path d="M22 21v-2a4 4 0 0 0-3-3.87"/><path d="M16 3.13a4 4 0 0 1 0 7.75"/></svg><span style="position:absolute;top:104.31px;font-size:10.5px;line-height:1;color:#e2e8f0;white-space:nowrap;left:39.60px;-webkit-text-stroke:0.4px #e2e8f0;letter-spacing:0.214px;">fernando.quesada@riverclear-cement.cr</span><svg style="position:absolute;left:21.20px;top:124.50px;" width="12.6" height="12.6" viewBox="0 0 24 24" fill="none" stroke="#718096" stroke-width="1.7" stroke-linecap="round" stroke-linejoin="round"><path d="M16 21v-2a4 4 0 0 0-4-4H6a4 4 0 0 0-4 4v2"/><circle cx="9" cy="7" r="4"/><path d="M22 21v-2a4 4 0 0 0-3-3.87"/><path d="M16 3.13a4 4 0 0 1 0 7.75"/></svg><span style="position:absolute;top:125.81px;font-size:10.5px;line-height:1;color:#e2e8f0;white-space:nowrap;left:39.60px;-webkit-text-stroke:0.4px #e2e8f0;letter-spacing:-0.312px;">E&amp;I</span><svg style="position:absolute;left:21.20px;top:146.00px;" width="12.6" height="12.6" viewBox="0 0 24 24" fill="none" stroke="#718096" stroke-width="1.7" stroke-linecap="round" stroke-linejoin="round"><path d="M8 2v4"/><path d="M16 2v4"/><rect width="18" height="18" x="3" y="4" rx="2"/><path d="M3 10h18"/></svg><span style="position:absolute;top:147.31px;font-size:10.5px;line-height:1;color:#e2e8f0;white-space:nowrap;left:39.60px;-webkit-text-stroke:0.4px #e2e8f0;letter-spacing:0.294px;">12/24/2024</span></div><div style="position:absolute;left:11.00px;top:440.00px;width:332.00px;height:176.00px;box-sizing:border-box;background:#1e293b;background-clip:padding-box;border:1px solid rgba(100,116,139,0.42);border-radius:5.6px;overflow:hidden;"><span style="position:absolute;top:16.03px;font-size:10.6px;line-height:1;color:#66768e;white-space:nowrap;left:21.60px;-webkit-text-stroke:0.38px #66768e;transform:scaleX(1.12);transform-origin:0 0;letter-spacing:0.439px;">e6000004-0000-0000-0000-</span><span style="position:absolute;top:30.93px;font-size:10.6px;line-height:1;color:#66768e;white-space:nowrap;left:21.60px;-webkit-text-stroke:0.38px #66768e;transform:scaleX(1.12);transform-origin:0 0;letter-spacing:0.380px;">000000000004</span><div style="position:absolute;left:230.40px;top:18.70px;width:78.00px;height:20.50px;box-sizing:border-box;background:#5b1214;border:1px solid #7c2623;border-radius:11px;"><svg style="position:absolute;left:6.80px;top:3.50px;" width="10.6" height="10.6" viewBox="0 0 24 24" fill="none" stroke="#fca5a5" stroke-width="2.1" stroke-linecap="round" stroke-linejoin="round"><path d="M20 13c0 5-3.5 7.5-7.66 8.95a1 1 0 0 1-.67-.01C7.5 20.5 4 18 4 13V6a1 1 0 0 1 1-1c2 0 4.5-1.2 6.24-2.72a1.17 1.17 0 0 1 1.52 0C14.51 3.81 17 5 19 5a1 1 0 0 1 1 1z"/><path d="M12 8v4"/><path d="M12 16h.01"/></svg><span style="position:absolute;top:5.30px;font-size:10.4px;line-height:1;color:#fca5a5;white-space:nowrap;left:21.40px;font-weight:700;letter-spacing:-0.161px;">CRITICAL</span></div><div style="position:absolute;left:21.80px;top:50.00px;width:286.60px;height:1.00px;box-sizing:border-box;background:#323e53;"></div><span style="position:absolute;top:65.29px;font-size:12.3px;line-height:1;color:#f8fafc;white-space:nowrap;left:21.60px;font-weight:700;-webkit-text-stroke:0.25px #f8fafc;letter-spacing:-0.229px;">Rotate S7 crypto keys PLC-KILN-01</span><div style="position:absolute;left:21.80px;top:90.00px;width:286.60px;height:1.00px;box-sizing:border-box;background:#323e53;"></div><svg style="position:absolute;left:21.20px;top:103.00px;" width="12.6" height="12.6" viewBox="0 0 24 24" fill="none" stroke="#718096" stroke-width="1.7" stroke-linecap="round" stroke-linejoin="round"><path d="M16 21v-2a4 4 0 0 0-4-4H6a4 4 0 0 0-4 4v2"/><circle cx="9" cy="7" r="4"/><path d="M22 21v-2a4 4 0 0 0-3-3.87"/><path d="M16 3.13a4 4 0 0 1 0 7.75"/></svg><span style="position:absolute;top:104.31px;font-size:10.5px;line-height:1;color:#e2e8f0;white-space:nowrap;left:39.60px;-webkit-text-stroke:0.4px #e2e8f0;letter-spacing:0.096px;">martin.weber@siemens.com</span><svg style="position:absolute;left:21.20px;top:124.50px;" width="12.6" height="12.6" viewBox="0 0 24 24" fill="none" stroke="#718096" stroke-width="1.7" stroke-linecap="round" stroke-linejoin="round"><path d="M16 21v-2a4 4 0 0 0-4-4H6a4 4 0 0 0-4 4v2"/><circle cx="9" cy="7" r="4"/><path d="M22 21v-2a4 4 0 0 0-3-3.87"/><path d="M16 3.13a4 4 0 0 1 0 7.75"/></svg><span style="position:absolute;top:125.81px;font-size:10.5px;line-height:1;color:#e2e8f0;white-space:nowrap;left:39.60px;-webkit-text-stroke:0.4px #e2e8f0;letter-spacing:0.031px;">Control Systems</span><svg style="position:absolute;left:21.20px;top:146.00px;" width="12.6" height="12.6" viewBox="0 0 24 24" fill="none" stroke="#718096" stroke-width="1.7" stroke-linecap="round" stroke-linejoin="round"><path d="M8 2v4"/><path d="M16 2v4"/><rect width="18" height="18" x="3" y="4" rx="2"/><path d="M3 10h18"/></svg><span style="position:absolute;top:147.31px;font-size:10.5px;line-height:1;color:#e2e8f0;white-space:nowrap;left:39.60px;-webkit-text-stroke:0.4px #e2e8f0;letter-spacing:0.144px;">10/31/2024</span></div><div style="position:absolute;left:11.00px;top:627.00px;width:332.00px;height:176.00px;box-sizing:border-box;background:#1e293b;background-clip:padding-box;border:1px solid rgba(100,116,139,0.42);border-radius:5.6px;overflow:hidden;"><span style="position:absolute;top:16.03px;font-size:10.6px;line-height:1;color:#66768e;white-space:nowrap;left:21.60px;-webkit-text-stroke:0.38px #66768e;transform:scaleX(1.12);transform-origin:0 0;letter-spacing:0.358px;">e6000051-0000-0000-0000-</span><span style="position:absolute;top:30.93px;font-size:10.6px;line-height:1;color:#66768e;white-space:nowrap;left:21.60px;-webkit-text-stroke:0.38px #66768e;transform:scaleX(1.12);transform-origin:0 0;letter-spacing:0.217px;">000000000051</span><div style="position:absolute;left:230.40px;top:18.70px;width:78.00px;height:20.50px;box-sizing:border-box;background:#5b1214;border:1px solid #7c2623;border-radius:11px;"><svg style="position:absolute;left:6.80px;top:3.50px;" width="10.6" height="10.6" viewBox="0 0 24 24" fill="none" stroke="#fca5a5" stroke-width="2.1" stroke-linecap="round" stroke-linejoin="round"><path d="M20 13c0 5-3.5 7.5-7.66 8.95a1 1 0 0 1-.67-.01C7.5 20.5 4 18 4 13V6a1 1 0 0 1 1-1c2 0 4.5-1.2 6.24-2.72a1.17 1.17 0 0 1 1.52 0C14.51 3.81 17 5 19 5a1 1 0 0 1 1 1z"/><path d="M12 8v4"/><path d="M12 16h.01"/></svg><span style="position:absolute;top:5.30px;font-size:10.4px;line-height:1;color:#fca5a5;white-space:nowrap;left:21.40px;font-weight:700;letter-spacing:-0.161px;">CRITICAL</span></div><div style="position:absolute;left:21.80px;top:50.00px;width:286.60px;height:1.00px;box-sizing:border-box;background:#323e53;"></div><span style="position:absolute;top:65.29px;font-size:12.3px;line-height:1;color:#f8fafc;white-space:nowrap;left:21.60px;font-weight:700;-webkit-text-stroke:0.25px #f8fafc;letter-spacing:-0.186px;">Update Kaspersky defs SCADA-CART-SRV01</span><div style="position:absolute;left:21.80px;top:90.00px;width:286.60px;height:1.00px;box-sizing:border-box;background:#323e53;"></div><svg style="position:absolute;left:21.20px;top:103.00px;" width="12.6" height="12.6" viewBox="0 0 24 24" fill="none" stroke="#718096" stroke-width="1.7" stroke-linecap="round" stroke-linejoin="round"><path d="M16 21v-2a4 4 0 0 0-4-4H6a4 4 0 0 0-4 4v2"/><circle cx="9" cy="7" r="4"/><path d="M22 21v-2a4 4 0 0 0-3-3.87"/><path d="M16 3.13a4 4 0 0 1 0 7.75"/></svg><span style="position:absolute;top:104.31px;font-size:10.5px;line-height:1;color:#e2e8f0;white-space:nowrap;left:39.60px;-webkit-text-stroke:0.4px #e2e8f0;letter-spacing:0.205px;">diego.ramirez@riverclear-cement.cr</span><svg style="position:absolute;left:21.20px;top:124.50px;" width="12.6" height="12.6" viewBox="0 0 24 24" fill="none" stroke="#718096" stroke-width="1.7" stroke-linecap="round" stroke-linejoin="round"><path d="M16 21v-2a4 4 0 0 0-4-4H6a4 4 0 0 0-4 4v2"/><circle cx="9" cy="7" r="4"/><path d="M22 21v-2a4 4 0 0 0-3-3.87"/><path d="M16 3.13a4 4 0 0 1 0 7.75"/></svg><span style="position:absolute;top:125.81px;font-size:10.5px;line-height:1;color:#e2e8f0;white-space:nowrap;left:39.60px;-webkit-text-stroke:0.4px #e2e8f0;letter-spacing:-0.255px;">SOC</span><svg style="position:absolute;left:21.20px;top:146.00px;" width="12.6" height="12.6" viewBox="0 0 24 24" fill="none" stroke="#718096" stroke-width="1.7" stroke-linecap="round" stroke-linejoin="round"><path d="M8 2v4"/><path d="M16 2v4"/><rect width="18" height="18" x="3" y="4" rx="2"/><path d="M3 10h18"/></svg><span style="position:absolute;top:147.31px;font-size:10.5px;line-height:1;color:#e2e8f0;white-space:nowrap;left:39.60px;-webkit-text-stroke:0.4px #e2e8f0;letter-spacing:0.194px;">12/10/2024</span></div><div style="position:absolute;left:11.00px;top:814.00px;width:332.00px;height:176.00px;box-sizing:border-box;background:#1e293b;background-clip:padding-box;border:1px solid rgba(100,116,139,0.42);border-radius:5.6px;overflow:hidden;"><span style="position:absolute;top:16.03px;font-size:10.6px;line-height:1;color:#66768e;white-space:nowrap;left:21.60px;-webkit-text-stroke:0.38px #66768e;transform:scaleX(1.12);transform-origin:0 0;letter-spacing:0.439px;">e6000022-0000-0000-0000-</span><span style="position:absolute;top:30.93px;font-size:10.6px;line-height:1;color:#66768e;white-space:nowrap;left:21.60px;-webkit-text-stroke:0.38px #66768e;transform:scaleX(1.12);transform-origin:0 0;letter-spacing:0.380px;">000000000022</span><div style="position:absolute;left:230.40px;top:18.70px;width:78.00px;height:20.50px;box-sizing:border-box;background:#5b1214;border:1px solid #7c2623;border-radius:11px;"><svg style="position:absolute;left:6.80px;top:3.50px;" width="10.6" height="10.6" viewBox="0 0 24 24" fill="none" stroke="#fca5a5" stroke-width="2.1" stroke-linecap="round" stroke-linejoin="round"><path d="M20 13c0 5-3.5 7.5-7.66 8.95a1 1 0 0 1-.67-.01C7.5 20.5 4 18 4 13V6a1 1 0 0 1 1-1c2 0 4.5-1.2 6.24-2.72a1.17 1.17 0 0 1 1.52 0C14.51 3.81 17 5 19 5a1 1 0 0 1 1 1z"/><path d="M12 8v4"/><path d="M12 16h.01"/></svg><span style="position:absolute;top:5.30px;font-size:10.4px;line-height:1;color:#fca5a5;white-space:nowrap;left:21.40px;font-weight:700;letter-spacing:-0.161px;">CRITICAL</span></div><div style="position:absolute;left:21.80px;top:50.00px;width:286.60px;height:1.00px;box-sizing:border-box;background:#323e53;"></div><span style="position:absolute;top:65.29px;font-size:12.3px;line-height:1;color:#f8fafc;white-space:nowrap;left:21.60px;font-weight:700;-webkit-text-stroke:0.25px #f8fafc;letter-spacing:-0.143px;">Apply CIP stack patch PLC-RMILL-03</span><div style="position:absolute;left:21.80px;top:90.00px;width:286.60px;height:1.00px;box-sizing:border-box;background:#323e53;"></div><svg style="position:absolute;left:21.20px;top:103.00px;" width="12.6" height="12.6" viewBox="0 0 24 24" fill="none" stroke="#718096" stroke-width="1.7" stroke-linecap="round" stroke-linejoin="round"><path d="M16 21v-2a4 4 0 0 0-4-4H6a4 4 0 0 0-4 4v2"/><circle cx="9" cy="7" r="4"/><path d="M22 21v-2a4 4 0 0 0-3-3.87"/><path d="M16 3.13a4 4 0 0 1 0 7.75"/></svg><span style="position:absolute;top:104.31px;font-size:10.5px;line-height:1;color:#e2e8f0;white-space:nowrap;left:39.60px;-webkit-text-stroke:0.4px #e2e8f0;letter-spacing:0.098px;">james.mitchell@rockwell.com</span><svg style="position:absolute;left:21.20px;top:124.50px;" width="12.6" height="12.6" viewBox="0 0 24 24" fill="none" stroke="#718096" stroke-width="1.7" stroke-linecap="round" stroke-linejoin="round"><path d="M16 21v-2a4 4 0 0 0-4-4H6a4 4 0 0 0-4 4v2"/><circle cx="9" cy="7" r="4"/><path d="M22 21v-2a4 4 0 0 0-3-3.87"/><path d="M16 3.13a4 4 0 0 1 0 7.75"/></svg><span style="position:absolute;top:125.81px;font-size:10.5px;line-height:1;color:#e2e8f0;white-space:nowrap;left:39.60px;-webkit-text-stroke:0.4px #e2e8f0;letter-spacing:0.031px;">Control Systems</span><svg style="position:absolute;left:21.20px;top:146.00px;" width="12.6" height="12.6" viewBox="0 0 24 24" fill="none" stroke="#718096" stroke-width="1.7" stroke-linecap="round" stroke-linejoin="round"><path d="M8 2v4"/><path d="M16 2v4"/><rect width="18" height="18" x="3" y="4" rx="2"/><path d="M3 10h18"/></svg><span style="position:absolute;top:147.31px;font-size:10.5px;line-height:1;color:#e2e8f0;white-space:nowrap;left:39.60px;-webkit-text-stroke:0.4px #e2e8f0;letter-spacing:0.222px;">11/26/2024</span></div><div style="position:absolute;left:353.00px;top:56.00px;width:5.00px;height:308.00px;box-sizing:border-box;background:#6a7b96;border-radius:3px;"></div></div>
<div style="position:absolute;left:801.00px;top:289.00px;width:360.00px;height:816.00px;box-sizing:border-box;background:#0c4a6e;border:1px solid #2a7f6a;border-radius:7.2px;overflow:hidden;"><div style="position:absolute;left:0.00px;top:0.00px;width:358.00px;height:55.00px;box-sizing:border-box;background:#0c4a6e;border-bottom:1px solid #2a7f6a;"></div><svg style="position:absolute;left:14.15px;top:18.40px;" width="18" height="18" viewBox="0 0 24 24" fill="none" stroke="#43d787" stroke-width="2" stroke-linecap="round" stroke-linejoin="round"><circle cx="12" cy="12" r="10"/><path d="m9 12 2 2 4-4"/></svg><span style="position:absolute;top:20.26px;font-size:14.1px;line-height:1;color:#7dd3fc;white-space:nowrap;left:39.75px;font-weight:700;-webkit-text-stroke:0.3px #7dd3fc;letter-spacing:-0.396px;">Resolved</span><span style="position:absolute;top:18.92px;font-size:16.4px;line-height:1;color:#4ade80;white-space:nowrap;right:14.55px;font-weight:700;-webkit-text-stroke:0.3px #4ade80;">4</span><div style="position:absolute;left:11.00px;top:66.00px;width:336.00px;height:176.00px;box-sizing:border-box;background:#1e293b;background-clip:padding-box;border:1px solid rgba(100,116,139,0.42);border-radius:5.6px;overflow:hidden;"><span style="position:absolute;top:16.03px;font-size:10.6px;line-height:1;color:#66768e;white-space:nowrap;left:21.20px;-webkit-text-stroke:0.38px #66768e;transform:scaleX(1.12);transform-origin:0 0;letter-spacing:0.439px;">e6000047-0000-0000-0000-</span><span style="position:absolute;top:30.93px;font-size:10.6px;line-height:1;color:#66768e;white-space:nowrap;left:21.20px;-webkit-text-stroke:0.38px #66768e;transform:scaleX(1.12);transform-origin:0 0;letter-spacing:0.380px;">000000000047</span><div style="position:absolute;left:255.00px;top:18.70px;width:58.20px;height:20.50px;box-sizing:border-box;background:#5a1e08;border:1px solid #fde3d3;border-radius:11px;"><svg style="position:absolute;left:6.80px;top:3.50px;" width="10.6" height="10.6" viewBox="0 0 24 24" fill="none" stroke="#fdba74" stroke-width="2.1" stroke-linecap="round" stroke-linejoin="round"><path d="m21.73 18-8-14a2 2 0 0 0-3.48 0l-8 14A2 2 0 0 0 4 21h16a2 2 0 0 0 1.73-3Z"/><path d="M12 9v4"/><path d="M12 17h.01"/></svg><span style="position:absolute;top:5.30px;font-size:10.4px;line-height:1;color:#fdba74;white-space:nowrap;left:21.40px;font-weight:700;letter-spacing:0.079px;">HIGH</span></div><div style="position:absolute;left:21.40px;top:50.00px;width:291.80px;height:1.00px;box-sizing:border-box;background:#323e53;"></div><span style="position:absolute;top:65.29px;font-size:12.3px;line-height:1;color:#f8fafc;white-space:nowrap;left:21.20px;font-weight:700;-webkit-text-stroke:0.25px #f8fafc;letter-spacing:-0.138px;">Disable MSDT protocol ENG-CART-WS01</span><div style="position:absolute;left:21.40px;top:90.00px;width:291.80px;height:1.00px;box-sizing:border-box;background:#323e53;"></div><svg style="position:absolute;left:20.80px;top:103.00px;" width="12.6" height="12.6" viewBox="0 0 24 24" fill="none" stroke="#718096" stroke-width="1.7" stroke-linecap="round" stroke-linejoin="round"><path d="M16 21v-2a4 4 0 0 0-4-4H6a4 4 0 0 0-4 4v2"/><circle cx="9" cy="7" r="4"/><path d="M22 21v-2a4 4 0 0 0-3-3.87"/><path d="M16 3.13a4 4 0 0 1 0 7.75"/></svg><span style="position:absolute;top:104.31px;font-size:10.5px;line-height:1;color:#e2e8f0;white-space:nowrap;left:39.20px;-webkit-text-stroke:0.4px #e2e8f0;letter-spacing:0.199px;">daniel.urena@riverclear-cement.cr</span><svg style="position:absolute;left:20.80px;top:124.50px;" width="12.6" height="12.6" viewBox="0 0 24 24" fill="none" stroke="#718096" stroke-width="1.7" stroke-linecap="round" stroke-linejoin="round"><path d="M16 21v-2a4 4 0 0 0-4-4H6a4 4 0 0 0-4 4v2"/><circle cx="9" cy="7" r="4"/><path d="M22 21v-2a4 4 0 0 0-3-3.87"/><path d="M16 3.13a4 4 0 0 1 0 7.75"/></svg><span style="position:absolute;top:125.81px;font-size:10.5px;line-height:1;color:#e2e8f0;white-space:nowrap;left:39.20px;-webkit-text-stroke:0.4px #e2e8f0;letter-spacing:0.198px;">IT Operations</span><svg style="position:absolute;left:20.80px;top:146.00px;" width="12.6" height="12.6" viewBox="0 0 24 24" fill="none" stroke="#718096" stroke-width="1.7" stroke-linecap="round" stroke-linejoin="round"><path d="M8 2v4"/><path d="M16 2v4"/><rect width="18" height="18" x="3" y="4" rx="2"/><path d="M3 10h18"/></svg><span style="position:absolute;top:147.31px;font-size:10.5px;line-height:1;color:#e2e8f0;white-space:nowrap;left:39.20px;-webkit-text-stroke:0.4px #e2e8f0;letter-spacing:0.531px;">8/22/2024</span></div><div style="position:absolute;left:11.00px;top:253.00px;width:336.00px;height:176.00px;box-sizing:border-box;background:#1e293b;background-clip:padding-box;border:1px solid rgba(100,116,139,0.42);border-radius:5.6px;overflow:hidden;"><span style="position:absolute;top:16.03px;font-size:10.6px;line-height:1;color:#66768e;white-space:nowrap;left:21.20px;-webkit-text-stroke:0.38px #66768e;transform:scaleX(1.12);transform-origin:0 0;letter-spacing:0.439px;">e6000059-0000-0000-0000-</span><span style="position:absolute;top:30.93px;font-size:10.6px;line-height:1;color:#66768e;white-space:nowrap;left:21.20px;-webkit-text-stroke:0.38px #66768e;transform:scaleX(1.12);transform-origin:0 0;letter-spacing:0.380px;">000000000059</span><div style="position:absolute;left:235.20px;top:18.70px;width:78.00px;height:20.50px;box-sizing:border-box;background:#5b1214;border:1px solid #7c2623;border-radius:11px;"><svg style="position:absolute;left:6.80px;top:3.50px;" width="10.6" height="10.6" viewBox="0 0 24 24" fill="none" stroke="#fca5a5" stroke-width="2.1" stroke-linecap="round" stroke-linejoin="round"><path d="M20 13c0 5-3.5 7.5-7.66 8.95a1 1 0 0 1-.67-.01C7.5 20.5 4 18 4 13V6a1 1 0 0 1 1-1c2 0 4.5-1.2 6.24-2.72a1.17 1.17 0 0 1 1.52 0C14.51 3.81 17 5 19 5a1 1 0 0 1 1 1z"/><path d="M12 8v4"/><path d="M12 16h.01"/></svg><span style="position:absolute;top:5.30px;font-size:10.4px;line-height:1;color:#fca5a5;white-space:nowrap;left:21.40px;font-weight:700;letter-spacing:-0.161px;">CRITICAL</span></div><div style="position:absolute;left:21.40px;top:50.00px;width:291.80px;height:1.00px;box-sizing:border-box;background:#323e53;"></div><span style="position:absolute;top:65.29px;font-size:12.3px;line-height:1;color:#f8fafc;white-space:nowrap;left:21.20px;font-weight:700;-webkit-text-stroke:0.25px #f8fafc;letter-spacing:-0.060px;">Verify IOS-XE patch RTR-CART-WAN01</span><div style="position:absolute;left:21.40px;top:90.00px;width:291.80px;height:1.00px;box-sizing:border-box;background:#323e53;"></div><svg style="position:absolute;left:20.80px;top:103.00px;" width="12.6" height="12.6" viewBox="0 0 24 24" fill="none" stroke="#718096" stroke-width="1.7" stroke-linecap="round" stroke-linejoin="round"><path d="M16 21v-2a4 4 0 0 0-4-4H6a4 4 0 0 0-4 4v2"/><circle cx="9" cy="7" r="4"/><path d="M22 21v-2a4 4 0 0 0-3-3.87"/><path d="M16 3.13a4 4 0 0 1 0 7.75"/></svg><span style="position:absolute;top:104.31px;font-size:10.5px;line-height:1;color:#e2e8f0;white-space:nowrap;left:39.20px;-webkit-text-stroke:0.4px #e2e8f0;letter-spacing:0.229px;">gabriela.rojas@riverclear-cement.cr</span><svg style="position:absolute;left:20.80px;top:124.50px;" width="12.6" height="12.6" viewBox="0 0 24 24" fill="none" stroke="#718096" stroke-width="1.7" stroke-linecap="round" stroke-linejoin="round"><path d="M16 21v-2a4 4 0 0 0-4-4H6a4 4 0 0 0-4 4v2"/><circle cx="9" cy="7" r="4"/><path d="M22 21v-2a4 4 0 0 0-3-3.87"/><path d="M16 3.13a4 4 0 0 1 0 7.75"/></svg><span style="position:absolute;top:125.81px;font-size:10.5px;line-height:1;color:#e2e8f0;white-space:nowrap;left:39.20px;-webkit-text-stroke:0.4px #e2e8f0;letter-spacing:0.242px;">IT Network</span><svg style="position:absolute;left:20.80px;top:146.00px;" width="12.6" height="12.6" viewBox="0 0 24 24" fill="none" stroke="#718096" stroke-width="1.7" stroke-linecap="round" stroke-linejoin="round"><path d="M8 2v4"/><path d="M16 2v4"/><rect width="18" height="18" x="3" y="4" rx="2"/><path d="M3 10h18"/></svg><span style="position:absolute;top:147.31px;font-size:10.5px;line-height:1;color:#e2e8f0;white-space:nowrap;left:39.20px;-webkit-text-stroke:0.4px #e2e8f0;letter-spacing:0.253px;">7/21/2024</span></div><div style="position:absolute;left:11.00px;top:440.00px;width:336.00px;height:176.00px;box-sizing:border-box;background:#1e293b;background-clip:padding-box;border:1px solid rgba(100,116,139,0.42);border-radius:5.6px;overflow:hidden;"><span style="position:absolute;top:16.03px;font-size:10.6px;line-height:1;color:#66768e;white-space:nowrap;left:21.20px;-webkit-text-stroke:0.38px #66768e;transform:scaleX(1.12);transform-origin:0 0;letter-spacing:0.439px;">e6000048-0000-0000-0000-</span><span style="position:absolute;top:30.93px;font-size:10.6px;line-height:1;color:#66768e;white-space:nowrap;left:21.20px;-webkit-text-stroke:0.38px #66768e;transform:scaleX(1.12);transform-origin:0 0;letter-spacing:0.380px;">000000000048</span><div style="position:absolute;left:255.00px;top:18.70px;width:58.20px;height:20.50px;box-sizing:border-box;background:#5a1e08;border:1px solid #fde3d3;border-radius:11px;"><svg style="position:absolute;left:6.80px;top:3.50px;" width="10.6" height="10.6" viewBox="0 0 24 24" fill="none" stroke="#fdba74" stroke-width="2.1" stroke-linecap="round" stroke-linejoin="round"><path d="m21.73 18-8-14a2 2 0 0 0-3.48 0l-8 14A2 2 0 0 0 4 21h16a2 2 0 0 0 1.73-3Z"/><path d="M12 9v4"/><path d="M12 17h.01"/></svg><span style="position:absolute;top:5.30px;font-size:10.4px;line-height:1;color:#fdba74;white-space:nowrap;left:21.40px;font-weight:700;letter-spacing:0.079px;">HIGH</span></div><div style="position:absolute;left:21.40px;top:50.00px;width:291.80px;height:1.00px;box-sizing:border-box;background:#323e53;"></div><span style="position:absolute;top:65.29px;font-size:12.3px;line-height:1;color:#f8fafc;white-space:nowrap;left:21.20px;font-weight:700;-webkit-text-stroke:0.25px #f8fafc;letter-spacing:-0.080px;">Disable MSDT protocol ENG-CART-WS02</span><div style="position:absolute;left:21.40px;top:90.00px;width:291.80px;height:1.00px;box-sizing:border-box;background:#323e53;"></div><svg style="position:absolute;left:20.80px;top:103.00px;" width="12.6" height="12.6" viewBox="0 0 24 24" fill="none" stroke="#718096" stroke-width="1.7" stroke-linecap="round" stroke-linejoin="round"><path d="M16 21v-2a4 4 0 0 0-4-4H6a4 4 0 0 0-4 4v2"/><circle cx="9" cy="7" r="4"/><path d="M22 21v-2a4 4 0 0 0-3-3.87"/><path d="M16 3.13a4 4 0 0 1 0 7.75"/></svg><span style="position:absolute;top:104.31px;font-size:10.5px;line-height:1;color:#e2e8f0;white-space:nowrap;left:39.20px;-webkit-text-stroke:0.4px #e2e8f0;letter-spacing:0.199px;">daniel.urena@riverclear-cement.cr</span><svg style="position:absolute;left:20.80px;top:124.50px;" width="12.6" height="12.6" viewBox="0 0 24 24" fill="none" stroke="#718096" stroke-width="1.7" stroke-linecap="round" stroke-linejoin="round"><path d="M16 21v-2a4 4 0 0 0-4-4H6a4 4 0 0 0-4 4v2"/><circle cx="9" cy="7" r="4"/><path d="M22 21v-2a4 4 0 0 0-3-3.87"/><path d="M16 3.13a4 4 0 0 1 0 7.75"/></svg><span style="position:absolute;top:125.81px;font-size:10.5px;line-height:1;color:#e2e8f0;white-space:nowrap;left:39.20px;-webkit-text-stroke:0.4px #e2e8f0;letter-spacing:0.198px;">IT Operations</span><svg style="position:absolute;left:20.80px;top:146.00px;" width="12.6" height="12.6" viewBox="0 0 24 24" fill="none" stroke="#718096" stroke-width="1.7" stroke-linecap="round" stroke-linejoin="round"><path d="M8 2v4"/><path d="M16 2v4"/><rect width="18" height="18" x="3" y="4" rx="2"/><path d="M3 10h18"/></svg><span style="position:absolute;top:147.31px;font-size:10.5px;line-height:1;color:#e2e8f0;white-space:nowrap;left:39.20px;-webkit-text-stroke:0.4px #e2e8f0;letter-spacing:0.531px;">8/25/2024</span></div><div style="position:absolute;left:11.00px;top:627.00px;width:336.00px;height:176.00px;box-sizing:border-box;background:#1e293b;background-clip:padding-box;border:1px solid rgba(100,116,139,0.42);border-radius:5.6px;overflow:hidden;"><span style="position:absolute;top:16.03px;font-size:10.6px;line-height:1;color:#66768e;white-space:nowrap;left:21.20px;-webkit-text-stroke:0.38px #66768e;transform:scaleX(1.12);transform-origin:0 0;letter-spacing:0.358px;">e6000014-0000-0000-0000-</span><span style="position:absolute;top:30.93px;font-size:10.6px;line-height:1;color:#66768e;white-space:nowrap;left:21.20px;-webkit-text-stroke:0.38px #66768e;transform:scaleX(1.12);transform-origin:0 0;letter-spacing:0.217px;">000000000014</span><div style="position:absolute;left:255.00px;top:18.70px;width:58.20px;height:20.50px;box-sizing:border-box;background:#5a1e08;border:1px solid #fde3d3;border-radius:11px;"><svg style="position:absolute;left:6.80px;top:3.50px;" width="10.6" height="10.6" viewBox="0 0 24 24" fill="none" stroke="#fdba74" stroke-width="2.1" stroke-linecap="round" stroke-linejoin="round"><path d="m21.73 18-8-14a2 2 0 0 0-3.48 0l-8 14A2 2 0 0 0 4 21h16a2 2 0 0 0 1.73-3Z"/><path d="M12 9v4"/><path d="M12 17h.01"/></svg><span style="position:absolute;top:5.30px;font-size:10.4px;line-height:1;color:#fdba74;white-space:nowrap;left:21.40px;font-weight:700;letter-spacing:0.079px;">HIGH</span></div><div style="position:absolute;left:21.40px;top:50.00px;width:291.80px;height:1.00px;box-sizing:border-box;background:#323e53;"></div><span style="position:absolute;top:65.29px;font-size:12.3px;line-height:1;color:#f8fafc;white-space:nowrap;left:21.20px;font-weight:700;-webkit-text-stroke:0.25px #f8fafc;letter-spacing:-0.058px;">Accept risk: S7-300 EOL PLC-KILN-04</span><div style="position:absolute;left:21.40px;top:90.00px;width:291.80px;height:1.00px;box-sizing:border-box;background:#323e53;"></div><svg style="position:absolute;left:20.80px;top:103.00px;" width="12.6" height="12.6" viewBox="0 0 24 24" fill="none" stroke="#718096" stroke-width="1.7" stroke-linecap="round" stroke-linejoin="round"><path d="M16 21v-2a4 4 0 0 0-4-4H6a4 4 0 0 0-4 4v2"/><circle cx="9" cy="7" r="4"/><path d="M22 21v-2a4 4 0 0 0-3-3.87"/><path d="M16 3.13a4 4 0 0 1 0 7.75"/></svg><span style="position:absolute;top:104.31px;font-size:10.5px;line-height:1;color:#e2e8f0;white-space:nowrap;left:39.20px;-webkit-text-stroke:0.4px #e2e8f0;letter-spacing:0.170px;">carlos.mendez@riverclear-cement.cr</span><svg style="position:absolute;left:20.80px;top:124.50px;" width="12.6" height="12.6" viewBox="0 0 24 24" fill="none" stroke="#718096" stroke-width="1.7" stroke-linecap="round" stroke-linejoin="round"><path d="M16 21v-2a4 4 0 0 0-4-4H6a4 4 0 0 0-4 4v2"/><circle cx="9" cy="7" r="4"/><path d="M22 21v-2a4 4 0 0 0-3-3.87"/><path d="M16 3.13a4 4 0 0 1 0 7.75"/></svg><span style="position:absolute;top:125.81px;font-size:10.5px;line-height:1;color:#e2e8f0;white-space:nowrap;left:39.20px;-webkit-text-stroke:0.4px #e2e8f0;letter-spacing:0.068px;">OT Security</span><svg style="position:absolute;left:20.80px;top:146.00px;" width="12.6" height="12.6" viewBox="0 0 24 24" fill="none" stroke="#718096" stroke-width="1.7" stroke-linecap="round" stroke-linejoin="round"><path d="M8 2v4"/><path d="M16 2v4"/><rect width="18" height="18" x="3" y="4" rx="2"/><path d="M3 10h18"/></svg><span style="position:absolute;top:147.31px;font-size:10.5px;line-height:1;color:#e2e8f0;white-space:nowrap;left:39.20px;-webkit-text-stroke:0.4px #e2e8f0;letter-spacing:0.642px;">7/30/2024</span></div></div>
<div style="position:absolute;left:1183.00px;top:289.00px;width:360.00px;height:417.00px;box-sizing:border-box;background:#0f172a;border:1px solid #354055;border-radius:7.2px;overflow:hidden;"><div style="position:absolute;left:0.00px;top:0.00px;width:358.00px;height:55.00px;box-sizing:border-box;background:#0f172a;border-bottom:1px solid #354055;"></div><svg style="position:absolute;left:13.85px;top:18.40px;" width="18" height="18" viewBox="0 0 24 24" fill="none" stroke="#f1f5f9" stroke-width="2" stroke-linecap="round" stroke-linejoin="round"><circle cx="12" cy="12" r="10"/><path d="m9 12 2 2 4-4"/></svg><span style="position:absolute;top:20.26px;font-size:14.1px;line-height:1;color:#f1f5f9;white-space:nowrap;left:39.45px;font-weight:700;-webkit-text-stroke:0.3px #f1f5f9;letter-spacing:-0.417px;">Closed</span><span style="position:absolute;top:18.92px;font-size:16.4px;line-height:1;color:#f1f5f9;white-space:nowrap;right:14.55px;font-weight:700;-webkit-text-stroke:0.3px #f1f5f9;">1</span><div style="position:absolute;left:10.00px;top:66.00px;width:337.00px;height:176.00px;box-sizing:border-box;background:#1e293b;background-clip:padding-box;border:1px solid rgba(100,116,139,0.42);border-radius:5.6px;overflow:hidden;"><span style="position:absolute;top:16.03px;font-size:10.6px;line-height:1;color:#66768e;white-space:nowrap;left:21.50px;-webkit-text-stroke:0.38px #66768e;transform:scaleX(1.12);transform-origin:0 0;letter-spacing:0.439px;">e6000087-0000-0000-0000-</span><span style="position:absolute;top:30.93px;font-size:10.6px;line-height:1;color:#66768e;white-space:nowrap;left:21.50px;-webkit-text-stroke:0.38px #66768e;transform:scaleX(1.12);transform-origin:0 0;letter-spacing:0.380px;">000000000087</span><div style="position:absolute;left:258.00px;top:18.70px;width:55.20px;height:20.50px;box-sizing:border-box;background:#1b2863;border:1px solid #273b90;border-radius:11px;"><svg style="position:absolute;left:6.80px;top:3.50px;" width="10.6" height="10.6" viewBox="0 0 24 24" fill="none" stroke="#93c5fd" stroke-width="2.1" stroke-linecap="round" stroke-linejoin="round"><circle cx="12" cy="12" r="10"/><path d="M12 16v-4"/><path d="M12 8h.01"/></svg><span style="position:absolute;top:5.30px;font-size:10.4px;line-height:1;color:#93c5fd;white-space:nowrap;left:21.40px;font-weight:700;letter-spacing:-0.083px;">LOW</span></div><div style="position:absolute;left:21.70px;top:50.00px;width:291.50px;height:1.00px;box-sizing:border-box;background:#323e53;"></div><span style="position:absolute;top:65.29px;font-size:12.3px;line-height:1;color:#f8fafc;white-space:nowrap;left:21.50px;font-weight:700;-webkit-text-stroke:0.25px #f8fafc;letter-spacing:-0.124px;">Verify PROFIsafe CRC SIS-KILN-01</span><div style="position:absolute;left:21.70px;top:90.00px;width:291.50px;height:1.00px;box-sizing:border-box;background:#323e53;"></div><svg style="position:absolute;left:21.10px;top:103.00px;" width="12.6" height="12.6" viewBox="0 0 24 24" fill="none" stroke="#718096" stroke-width="1.7" stroke-linecap="round" stroke-linejoin="round"><path d="M16 21v-2a4 4 0 0 0-4-4H6a4 4 0 0 0-4 4v2"/><circle cx="9" cy="7" r="4"/><path d="M22 21v-2a4 4 0 0 0-3-3.87"/><path d="M16 3.13a4 4 0 0 1 0 7.75"/></svg><span style="position:absolute;top:104.31px;font-size:10.5px;line-height:1;color:#e2e8f0;white-space:nowrap;left:39.50px;-webkit-text-stroke:0.4px #e2e8f0;letter-spacing:0.143px;">melissa.hernandez@riverclear-cement.cr</span><svg style="position:absolute;left:21.10px;top:124.50px;" width="12.6" height="12.6" viewBox="0 0 24 24" fill="none" stroke="#718096" stroke-width="1.7" stroke-linecap="round" stroke-linejoin="round"><path d="M16 21v-2a4 4 0 0 0-4-4H6a4 4 0 0 0-4 4v2"/><circle cx="9" cy="7" r="4"/><path d="M22 21v-2a4 4 0 0 0-3-3.87"/><path d="M16 3.13a4 4 0 0 1 0 7.75"/></svg><span style="position:absolute;top:125.81px;font-size:10.5px;line-height:1;color:#e2e8f0;white-space:nowrap;left:39.50px;-webkit-text-stroke:0.4px #e2e8f0;letter-spacing:0.370px;">Safety</span><svg style="position:absolute;left:21.10px;top:146.00px;" width="12.6" height="12.6" viewBox="0 0 24 24" fill="none" stroke="#718096" stroke-width="1.7" stroke-linecap="round" stroke-linejoin="round"><path d="M8 2v4"/><path d="M16 2v4"/><rect width="18" height="18" x="3" y="4" rx="2"/><path d="M3 10h18"/></svg><span style="position:absolute;top:147.31px;font-size:10.5px;line-height:1;color:#e2e8f0;white-space:nowrap;left:39.50px;-webkit-text-stroke:0.4px #e2e8f0;letter-spacing:-0.024px;">1/17/2025</span></div></div>
<div style="position:absolute;left:0.00px;top:1231.00px;width:2291.00px;height:2.00px;box-sizing:border-box;background:#191c24;"></div></body></html>
